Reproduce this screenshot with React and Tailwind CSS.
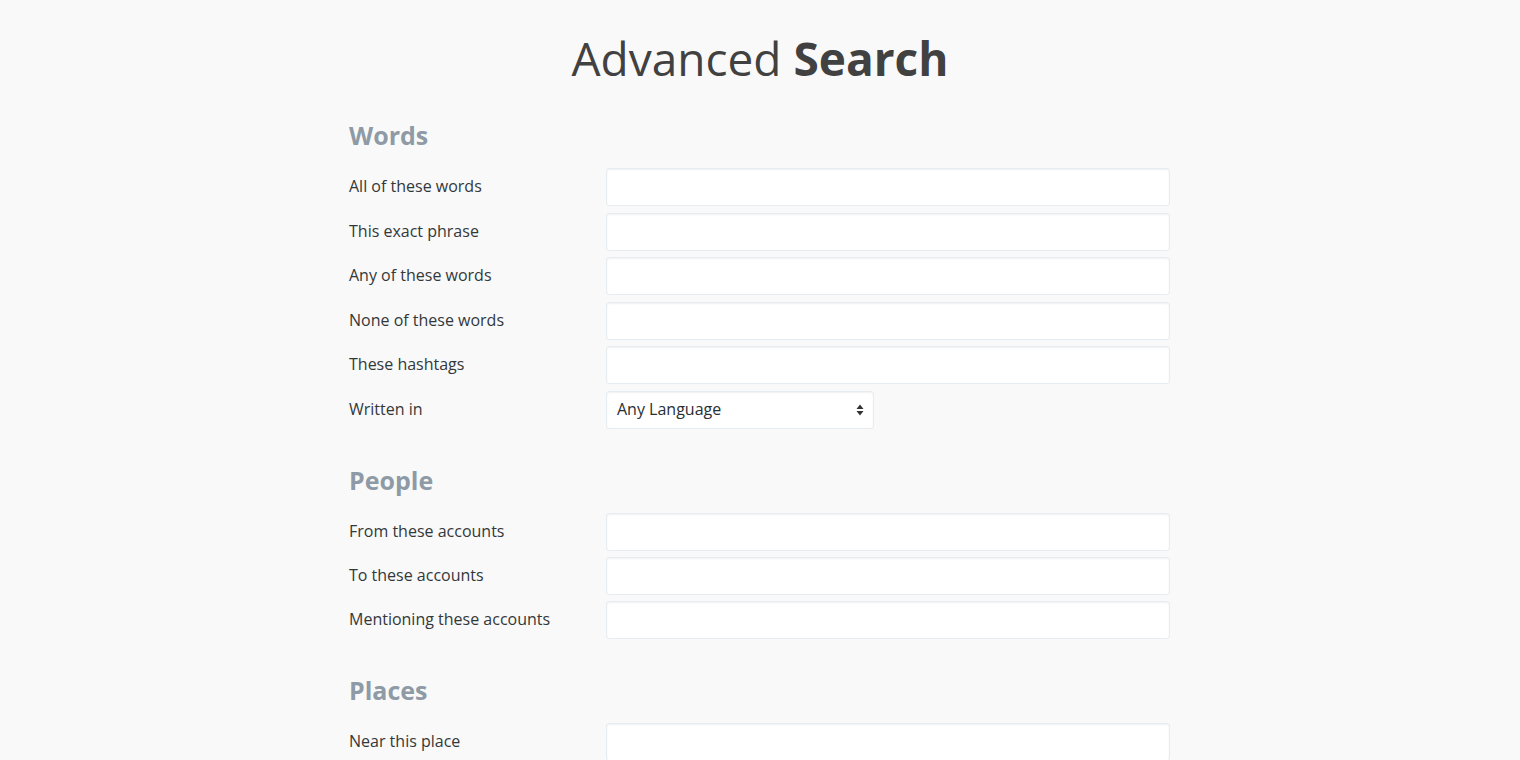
import React from 'react';

const SECTIONS = [
    {
        title: 'Words',
        mt: 'mt-[31px]',
        gap: 'gap-[6.6px]',
        rows: [
            { label: 'All of these words' },
            { label: 'This exact phrase' },
            { label: 'Any of these words' },
            { label: 'None of these words' },
            { label: 'These hashtags' },
            { label: 'Written in', select: 'Any Language' },
        ],
    },
    {
        title: 'People',
        mt: 'mt-[35px]',
        gap: 'gap-[6.2px]',
        rows: [
            { label: 'From these accounts' },
            { label: 'To these accounts' },
            { label: 'Mentioning these accounts' },
        ],
    },
    {
        title: 'Places',
        mt: 'mt-[35px]',
        gap: 'gap-[6.2px]',
        rows: [{ label: 'Near this place' }],
    },
];

function SelectArrows() {
    return (
        <svg width="8" height="12" viewBox="0 0 8 12" className="text-[#333]">
            <path d="M4 0.5 L7.5 5 L0.5 5 Z" fill="currentColor" />
            <path d="M4 11.5 L7.5 7 L0.5 7 Z" fill="currentColor" />
        </svg>
    );
}

function Row({ label, select }) {
    return (
        <div className="flex items-center h-[38px]">
            <label className="w-[257px] shrink-0 text-[16px] text-[#33383b] -translate-y-[1px]">{label}</label>
            {select ? (
                <div className="w-[268px] h-[38px] bg-white border border-[#e6ecf0] rounded-[3px] shadow-[inset_0_1px_2px_rgba(0,0,0,0.06)] flex items-center justify-between pl-[10px] pr-[9px] text-[16px] text-[#292f33]">
                    <span className="-translate-y-[1px]">{select}</span>
                    <SelectArrows />
                </div>
            ) : (
                <input
                    type="text"
                    className="w-[564px] h-[38px] bg-white border border-[#e6ecf0] rounded-[3px] shadow-[inset_0_1px_2px_rgba(0,0,0,0.06)] outline-none px-2"
                />
            )}
        </div>
    );
}

export default function App() {
    return (
        <div className="min-h-screen bg-[#f9f9f9] font-['Open_Sans',sans-serif]">
            <div className="w-[822px] mx-auto pt-[28px]">
                <h1 className="text-center text-[46px] leading-[60px] text-[#414141] font-normal">
                    Advanced <span className="font-bold">Search</span>
                </h1>

                {SECTIONS.map(section => (
                    <div key={section.title} className={section.mt}>
                        <h2 className="text-[25px] leading-[32px] font-bold text-[#8e9ba6] mb-[17px]">{section.title}</h2>
                        <div className={`flex flex-col ${section.gap}`}>
                            {section.rows.map(row => (
                                <Row key={row.label} {...row} />
                            ))}
                        </div>
                    </div>
                ))}
            </div>
        </div>
    );
}
